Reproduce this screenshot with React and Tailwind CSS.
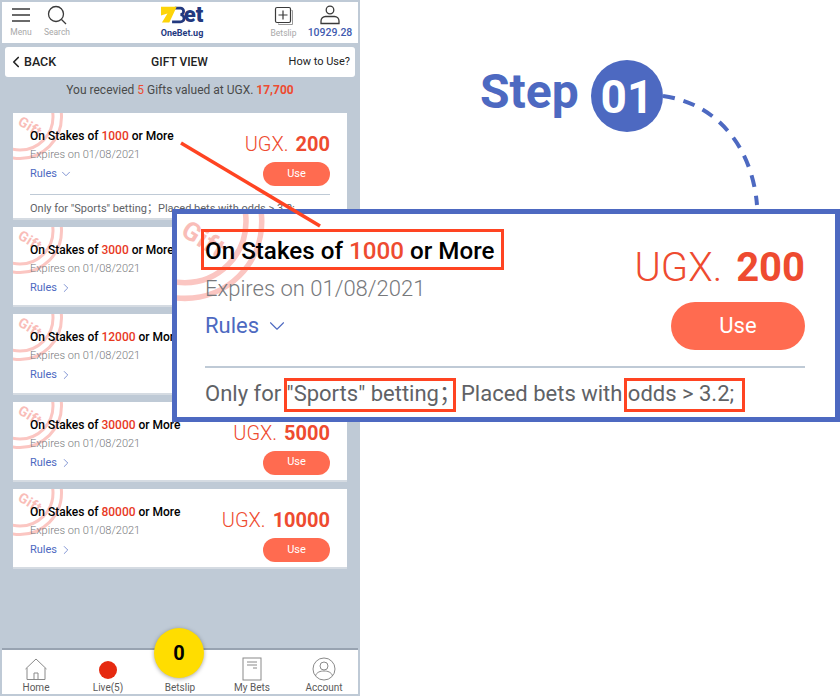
import { ChevronDown, ChevronLeft, ChevronRight } from "lucide-react";

const FONT = "font-['Roboto','Noto_Sans_CJK_SC',sans-serif]";

const gifts = [
  { stake: "1000", amount: "200", open: true },
  { stake: "3000", amount: "500" },
  { stake: "12000", amount: "1000" },
  { stake: "30000", amount: "5000" },
  { stake: "80000", amount: "10000" },
];

const GiftMark = ({ className }) => (
  <svg viewBox="0 0 60 56" className={className} fill="none">
    <circle cx="7" cy="4" r="41.5" stroke="#fbc6c2" strokeWidth="3" />
    <circle cx="7" cy="4" r="33" stroke="#fbc6c2" strokeWidth="3" />
    <text x="4" y="11" transform="rotate(32 4 11)" fontSize="14" letterSpacing="0.5" fontWeight="700" fontFamily="Roboto, sans-serif" fill="#f9bdb8">Gift</text>
  </svg>
);

const GiftCard = ({ gift }) => (
  <div className={`relative bg-white overflow-hidden border-b-2 border-[#d5dbe2] ${gift.open ? "h-[107px]" : "h-[80.3px]"}`}>
    <GiftMark className="absolute left-0 top-0 w-[60px] h-[56px]" />
    <div className="relative px-[17px] pt-[15px] flex justify-between">
      <div>
        <div className="text-[12px] leading-[16px] font-medium text-black whitespace-nowrap">
          On Stakes of <span className="text-[#e8391f]">{gift.stake}</span> or More
        </div>
        <div className="text-[11px] leading-[14px] mt-[4px] font-light text-[#77797c]">Expires on 01/08/2021</div>
        <div className="text-[11px] leading-[14px] mt-[4px] text-[#4d69c1] flex items-center gap-[2px] pt-[1px]">
          Rules
          {gift.open
            ? <ChevronDown size={14} strokeWidth={1.2} />
            : <ChevronRight size={14} strokeWidth={1.2} />}
        </div>
      </div>
      <div className="flex flex-col items-end">
        <div className="text-[#ee4b30] text-[20px] leading-[30px] whitespace-nowrap mt-[1px]">
          <span className="font-light">UGX.</span> <span className="font-bold ml-[2px]">{gift.amount}</span>
        </div>
        <div className="mt-[3px] w-[67px] h-[24px] rounded-full bg-[#ff6b50] text-white text-[11px] flex items-center justify-center">Use</div>
      </div>
    </div>
    {gift.open && (
      <div className="relative mx-[17px] mt-[8px] pt-[6px] border-t border-[#bfcad6] text-[11px] text-[#606266] whitespace-nowrap">
        Only for "Sports" betting；Placed bets with odds &gt; 3.2;
      </div>
    )}
  </div>
);

const Header = () => (
  <div className="h-[41px] bg-white mx-[2px] flex relative">
    <div className="w-[38px] flex flex-col items-center pt-[2px]">
      <svg width="18" height="20" viewBox="0 0 18 20" stroke="#3a3a3a" strokeWidth="1.4" fill="none">
        <path d="M0 5h18M0 11h18M0 17h18" />
      </svg>
      <span className="text-[8.500px] leading-[12px] mt-[2px] text-[#a8a8a8]">Menu</span>
    </div>
    <div className="w-[34px] flex flex-col items-center pt-[3px]">
      <svg width="20" height="20" viewBox="0 0 20 20" stroke="#3a3a3a" strokeWidth="1.3" fill="none">
        <circle cx="9" cy="9" r="7.5" />
        <path d="M14.500 14.500l4.500 4.500" />
      </svg>
      <span className="text-[8.500px] leading-[12px] mt-[1px] text-[#a8a8a8]">Search</span>
    </div>
    <div className="flex-1 flex flex-col items-center pt-[2px] pl-[36px]">
      <div className="flex items-center h-[22px]">
        <svg width="24" height="18" viewBox="0 0 26 18" fill="none">
          <path d="M15 1.500h6a3.500 3.500 0 0 1 0 7a4 4 0 0 1 0 8H12" stroke="#23397f" strokeWidth="3" />
          <path d="M0 0H17L9 17H1L7 7.500L0 9.500Z" fill="#fdd409" />
        </svg>
        <span className="text-[#23397f] text-[22px] leading-[22px] font-black -ml-[1px]">et</span>
      </div>
      <span className="text-[9px] leading-[12px] mt-[1px] font-bold text-[#23397f]">OneBet.ug</span>
    </div>
    <div className="w-[37px] ml-[11px] flex flex-col items-center pt-[4px]">
      <svg width="20" height="20" viewBox="0 0 20 20" stroke="#3a3a3a" fill="none">
        <path d="M17.500 4.500h1v14h-14v-1" stroke="#999" />
        <rect x="1.500" y="1.500" width="15" height="15" rx="1.500" strokeWidth="1.200" />
        <path d="M9 4.500v9M4.500 9h9" strokeWidth="1.200" />
      </svg>
      <span className="text-[8.500px] leading-[12px] mt-[1px] text-[#a8a8a8]">Betslip</span>
    </div>
    <div className="w-[56px] flex flex-col items-center pt-[3px]">
      <svg width="20" height="20" viewBox="0 0 20 20" stroke="#3a3a3a" strokeWidth="1.300" fill="none">
        <circle cx="10" cy="5" r="3.800" />
        <path d="M1 18.500v-2.500a4.500 4.500 0 0 1 4.500-4.500h9a4.500 4.500 0 0 1 4.500 4.500v2.500z" />
      </svg>
      <span className="text-[10.500px] leading-[12px] mt-[2px] font-medium text-[#3f5bb0]">10929.28</span>
    </div>
  </div>
);

const TabIcon = ({ name }) => {
  if (name === "Live(5)") return <div className="w-[18px] h-[18px] rounded-full bg-[#e62a10] mt-[3px] mb-[2px]" />;
  if (name === "Home") return (
    <svg width="24" height="24" viewBox="0 0 24 24" fill="none" stroke="#8a8a8a" strokeWidth="1">
      <path d="M1.500 12L12 2l10.500 10M3 11v11.500h18V11M10 22.500v-6.500h4v6.500" />
    </svg>
  );
  if (name === "My Bets") return (
    <svg width="24" height="24" viewBox="0 0 24 24" fill="none" stroke="#8a8a8a" strokeWidth="1">
      <rect x="3" y="1" width="18" height="22" />
      <path d="M7 5h10M7 8h10M13 11h4" />
    </svg>
  );
  return (
    <svg width="24" height="24" viewBox="0 0 24 24" fill="none" stroke="#8a8a8a" strokeWidth="1">
      <circle cx="12" cy="12" r="11" />
      <circle cx="12" cy="9" r="4" />
      <path d="M3.500 19c1-4 5-5 8.500-5s7.500 1 8.500 5" />
    </svg>
  );
};

const FooterTabs = () => (
  <div className="relative mx-[2px] mb-[2px] h-[46px] bg-white border-t-2 border-[#98a3b1] text-[10px] leading-[12px] text-[#5a5a5a]">
    <div className="-mx-[2px] h-full flex">
      {["Home", "Live(5)", "Betslip", "My Bets", "Account"].map((name) => (
        <div key={name} className="w-[72px] flex flex-col items-center justify-end">
          {name !== "Betslip" && <TabIcon name={name} />}
          <span className="mt-[1px]">{name}</span>
        </div>
      ))}
    </div>
    <div className="absolute left-[152px] -top-[22px] w-[50px] h-[50px] rounded-full bg-[#ffdd00] shadow-[0_1px_4px_rgba(0,0,0,0.35)] flex items-center justify-center text-[20px] font-bold text-black">0</div>
  </div>
);

const Phone = () => (
  <div className="w-[360px] h-[696px] bg-[#bfcad6] pt-[2px] flex flex-col">
    <Header />
    <div className="mx-[5px] mt-[4px] h-[30px] rounded-[3px] bg-white flex items-center justify-between pr-[5px] pl-[2px] text-[12px] text-[#222]">
      <div className="flex items-center font-medium w-[100px]">
        <ChevronLeft size={18} strokeWidth={2.2} />
        <span className="text-[12.500px] -ml-[1px]">BACK</span>
      </div>
      <div className="font-medium ml-[2px]">GIFT VIEW</div>
      <div className="w-[100px] text-right text-[11px]">How to Use?</div>
    </div>
    <div className="text-center text-[12px] leading-[16px] mt-[5px] text-[#4a4a4a]">
      You recevied <span className="text-[#ee4b30]">5</span> Gifts valued at UGX. <span className="text-[#ee4b30] font-bold">17,700</span>
    </div>
    <div className="mx-[13px] mt-[15px] flex flex-col gap-[7px] flex-1">
      {gifts.map((gift) => <GiftCard key={gift.stake} gift={gift} />)}
    </div>
    <FooterTabs />
  </div>
);

const Zoomed = () => (
  <div className="absolute left-[172px] top-[209px] w-[668px] h-[213px] bg-white border-[5px] border-[#4d69c1] overflow-hidden">
    <GiftMark className="absolute -left-[5px] top-0 w-[111px] h-[104px]" />
    <div className="relative pl-[28px] pr-[30px] pt-[21px] flex justify-between">
      <div>
        <div className="text-[24.200px] leading-[32px] font-medium text-black whitespace-nowrap">
          On Stakes of <span className="text-[#ee4b30]">1000</span> or More
        </div>
        <div className="text-[22px] leading-[28px] mt-[8px] font-light text-[#77797c]">Expires on 01/08/2021</div>
        <div className="text-[22px] leading-[28px] mt-[9px] text-[#4d69c1] flex items-center gap-[5px]">
          Rules <ChevronDown size={26} strokeWidth={1} />
        </div>
      </div>
      <div className="flex flex-col items-end">
        <div className="text-[#ee4b30] text-[40px] leading-[48px] whitespace-nowrap mt-[9px]">
          <span className="font-light">UGX.</span> <span className="font-bold ml-[4px]">200</span>
        </div>
        <div className="mt-[10px] w-[134px] h-[48px] pb-[2px] rounded-full bg-[#ff6b50] text-white text-[22px] flex items-center justify-center">Use</div>
      </div>
    </div>
    <div className="relative ml-[28px] mr-[30px] mt-[16px] pt-[10px] border-t-2 border-[#bfcad6] text-[22px] leading-[32px] text-[#606266] whitespace-nowrap">
      Only for "Sports" betting；Placed bets with odds &gt; 3.2;
    </div>
  </div>
);

const Highlight = ({ className }) => (
  <div className={`absolute border-[3px] border-[#ff4422] ${className}`} />
);

const App = () => (
  <div className={`relative w-[840px] h-[696px] bg-white overflow-hidden ${FONT}`}>
    <Phone />
    <Zoomed />
    <Highlight className="left-[201px] top-[229px] w-[303px] h-[41px]" />
    <Highlight className="left-[284px] top-[378px] w-[172px] h-[34px]" />
    <Highlight className="left-[624px] top-[378px] w-[121px] h-[34px]" />
    <svg className="absolute left-0 top-0 pointer-events-none" width="840" height="696" fill="none">
      <path d="M181 143L320 226" stroke="#ff4422" strokeWidth="3.5" />
      <path d="M663 96C715 103 752 145 757 205" stroke="#4d69c1" strokeWidth="4" strokeDasharray="12 9" />
    </svg>
    <div className="absolute left-[480px] top-[62px] text-[48px] leading-[60px] font-bold text-[#4d69c1]">Step</div>
    <div className="absolute left-[591px] top-[60px] w-[72px] h-[72px] pt-[2px] rounded-full bg-[#4d69c1] flex items-center justify-center text-white text-[46px] font-bold">01</div>
  </div>
);

export default App;
